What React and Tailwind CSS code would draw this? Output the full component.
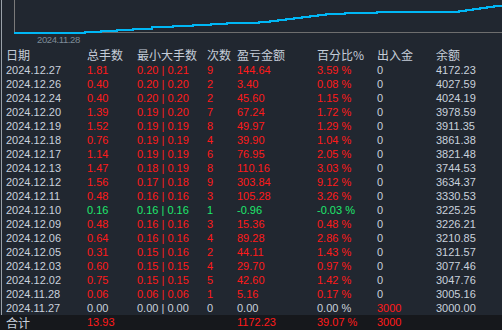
const ROWS = [
  ['2024.12.27', '1.81', '0.20 | 0.21', '9', '144.64', '3.59 %', '0', '4172.23', 'up'],
  ['2024.12.26', '0.40', '0.20 | 0.20', '2', '3.40', '0.08 %', '0', '4027.59', 'up'],
  ['2024.12.24', '0.40', '0.20 | 0.20', '2', '45.60', '1.15 %', '0', '4024.19', 'up'],
  ['2024.12.20', '1.39', '0.19 | 0.20', '7', '67.24', '1.72 %', '0', '3978.59', 'up'],
  ['2024.12.19', '1.52', '0.19 | 0.19', '8', '49.97', '1.29 %', '0', '3911.35', 'up'],
  ['2024.12.18', '0.76', '0.19 | 0.19', '4', '39.90', '1.04 %', '0', '3861.38', 'up'],
  ['2024.12.17', '1.14', '0.19 | 0.19', '6', '76.95', '2.05 %', '0', '3821.48', 'up'],
  ['2024.12.13', '1.47', '0.18 | 0.19', '8', '110.16', '3.03 %', '0', '3744.53', 'up'],
  ['2024.12.12', '1.56', '0.17 | 0.18', '9', '303.84', '9.12 %', '0', '3634.37', 'up'],
  ['2024.12.11', '0.48', '0.16 | 0.16', '3', '105.28', '3.26 %', '0', '3330.53', 'up'],
  ['2024.12.10', '0.16', '0.16 | 0.16', '1', '-0.96', '-0.03 %', '0', '3225.25', 'down'],
  ['2024.12.09', '0.48', '0.16 | 0.16', '3', '15.36', '0.48 %', '0', '3226.21', 'up'],
  ['2024.12.06', '0.64', '0.16 | 0.16', '4', '89.28', '2.86 %', '0', '3210.85', 'up'],
  ['2024.12.05', '0.31', '0.15 | 0.16', '2', '44.11', '1.43 %', '0', '3121.57', 'up'],
  ['2024.12.03', '0.60', '0.15 | 0.15', '4', '29.70', '0.97 %', '0', '3077.46', 'up'],
  ['2024.12.02', '0.75', '0.15 | 0.15', '5', '42.60', '1.42 %', '0', '3047.76', 'up'],
  ['2024.11.28', '0.06', '0.06 | 0.06', '1', '5.16', '0.17 %', '0', '3005.16', 'up'],
  ['2024.11.27', '0.00', '0.00 | 0.00', '0', '0.00', '0.00 %', '3000', '3000.00', 'flat'],
]

// balance curve, drawn as steps
const CURVE =
  'M14 33 H85 V32 H101 V31 H117 V30 H133 V29 H152 V27 H173 V26 H193 V25 H211 V24 H227 V23 ' +
  'H259 V22 H270 V21 H278 V20 H286 V19 H294 V18 H302 V17 H310 V16 H318 V15 H326 V14 H345 V13 ' +
  'H377 V12 H459 V11 H466 V10 H473 V9 H480 V8 H487 V7 H494 V6 H502'

const GRID = 'grid grid-cols-[81px_50px_70px_30px_80px_60px_59px_1fr]'

function tone(kind) {
  if (kind === 'up') return 'text-[#ff1a1a]'
  if (kind === 'down') return 'text-[#1ee86c]'
  return 'text-[#c9d1dc]'
}

export default function App() {
  return (
    <div className="w-[502px] h-[330px] overflow-hidden bg-[#212730] font-['Liberation_Sans',Arial,sans-serif] text-[11px] text-[#c9d1dc]">
      <div className="ml-[1px] border-l border-[#9aa1a9]">
        <svg width="500" height="47" viewBox="2 0 500 47" className="block">
          <line x1="14.5" y1="0" x2="14.5" y2="33" stroke="#7a7a7a" />
          <line x1="14" y1="32.5" x2="502" y2="32.5" stroke="#6e6e6e" />
          <path d={CURVE} fill="none" stroke="#00b7f5" strokeWidth="2" />
          <text
            x="37"
            y="43"
            fill="#7e8b98"
            fontSize="9.5"
            letterSpacing="-0.4"
            fontFamily="Liberation Sans, Arial, sans-serif"
          >
            2024.11.28
          </text>
        </svg>

        <div className={`${GRID} h-[16px] items-center pl-[4px] font-['Noto_Sans_CJK_SC',sans-serif] text-[12px] leading-none text-[#c5cdd9]`}>
          <span>日期</span>
          <span>总手数</span>
          <span>最小大手数</span>
          <span>次数</span>
          <span>盈亏金额</span>
          <span>百分比%</span>
          <span>出入金</span>
          <span>余额</span>
        </div>

        {ROWS.map((r) => {
          const c = tone(r[8])
          return (
            <div key={r[0]} className={`${GRID} h-[14px] items-center pl-[4px] leading-none whitespace-pre`}>
              <span>{r[0]}</span>
              <span className={c}>{r[1]}</span>
              <span className={c}>{r[2]}</span>
              <span className={c}>{r[3]}</span>
              <span className={c}>{r[4]}</span>
              <span className={c}>{r[5]}</span>
              <span className={r[6] === '0' ? '' : 'text-[#ff1a1a]'}>{r[6]}</span>
              <span>{r[7]}</span>
            </div>
          )
        })}
      </div>

      <div className={`${GRID} h-[15px] items-center bg-[#16181c] pl-[6px] leading-none text-[#ff1a1a]`}>
        <span className="font-['Noto_Sans_CJK_SC',sans-serif] text-[12px] text-[#c9d1dc]">合计</span>
        <span>13.93</span>
        <span></span>
        <span></span>
        <span>1172.23</span>
        <span>39.07 %</span>
        <span>3000</span>
        <span></span>
      </div>
    </div>
  )
}
